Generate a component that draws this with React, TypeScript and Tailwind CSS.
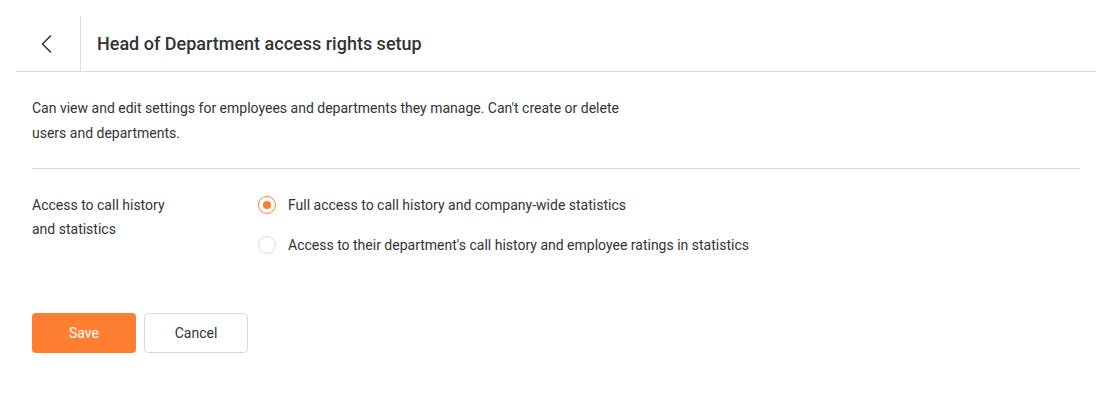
import React, { useState } from "react";

const options = [
  "Full access to call history and company-wide statistics",
  "Access to their department's call history and employee ratings in statistics",
];

const Radio: React.FC<{ checked: boolean; label: string; onSelect: () => void }> = ({
  checked,
  label,
  onSelect,
}) => {
  return (
    <label className="flex items-center h-6 cursor-pointer" onClick={onSelect}>
      <span
        className={
          checked
            ? "flex items-center justify-center w-[18px] h-[18px] rounded-full border border-[#ff7f32]"
            : "flex items-center justify-center w-[18px] h-[18px] rounded-full border border-[#d9d9d9]"
        }
      >
        {checked && <span className="w-2 h-2 rounded-full bg-[#ff7f32]" />}
      </span>
      <span className="ml-[12px] text-sm text-[#333333]">{label}</span>
    </label>
  );
};

export default function App() {
  const [selected, setSelected] = useState(0);

  return (
    <div className="w-[1112px] h-[394px] bg-white px-4 pt-4 font-['Roboto',sans-serif]">
      <div className="flex h-[56px] border-b border-[#dcdcdc]">
        <button type="button" className="flex items-center justify-center w-16 text-[#333333]">
          <svg width="20" height="20" viewBox="0 0 20 20" fill="none">
            <path d="M13 1.5L4.5 10L13 18.5" stroke="#333333" strokeWidth="1.5" />
          </svg>
        </button>
        <div className="w-px bg-[#dcdcdc]" />
        <h1 className="flex items-center pl-4 text-lg font-medium text-[#333333]">
          Head of Department access rights setup
        </h1>
      </div>

      <div className="px-4">
        <p className="mt-6 w-[600px] text-sm leading-[25px] text-[#333333]">
          Can view and edit settings for employees and departments they manage. Can't create or delete users and
          departments.
        </p>
        <div className="mt-[22px] border-t border-[#dcdcdc]" />

        <div className="flex mt-6">
          <div className="w-[226px] text-sm leading-6 text-[#333333]">
            Access to call history
            <br />
            and statistics
          </div>
          <div className="flex flex-col gap-4">
            {options.map((opt, i) => (
              <Radio key={i} checked={selected === i} label={opt} onSelect={() => setSelected(i)} />
            ))}
          </div>
        </div>

        <div className="flex gap-2 mt-14">
          <button
            type="button"
            className="w-[104px] h-10 rounded bg-[#ff7f32] text-sm text-white"
          >
            Save
          </button>
          <button
            type="button"
            className="w-[104px] h-10 rounded border border-[#d9d9d9] bg-white text-sm text-[#333333]"
          >
            Cancel
          </button>
        </div>
      </div>
    </div>
  );
}
